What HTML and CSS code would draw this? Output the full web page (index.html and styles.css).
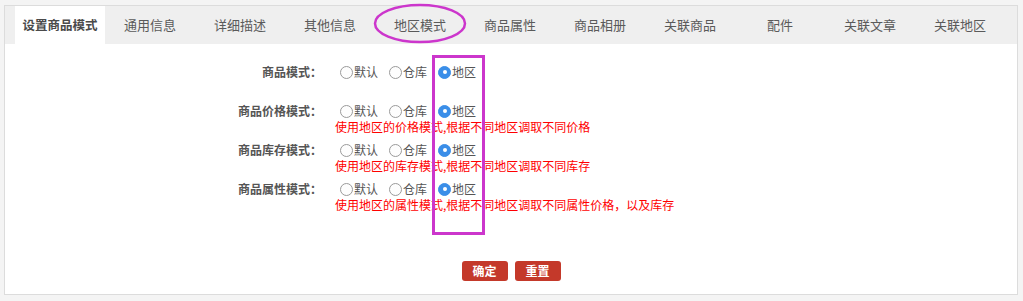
FILE: index.html
```html
<!DOCTYPE html>
<html lang="zh-CN">
<head>
<meta charset="utf-8">
<title>设置商品模式</title>
<link rel="stylesheet" href="styles.css">
</head>
<body>
<div class="panel">
  <ul class="tabs">
    <li class="tab active">设置商品模式</li>
    <li class="tab">通用信息</li>
    <li class="tab">详细描述</li>
    <li class="tab">其他信息</li>
    <li class="tab">地区模式</li>
    <li class="tab">商品属性</li>
    <li class="tab">商品相册</li>
    <li class="tab">关联商品</li>
    <li class="tab">配件</li>
    <li class="tab">关联文章</li>
    <li class="tab">关联地区</li>
  </ul>
  <div class="form">
    <div class="row">
      <div class="label">商品模式：</div>
      <div class="field">
        <div class="options">
          <span class="opt"><span class="radio"></span>默认</span>
          <span class="opt"><span class="radio"></span>仓库</span>
          <span class="opt"><span class="radio checked"></span>地区</span>
        </div>
      </div>
    </div>
    <div class="row">
      <div class="label">商品价格模式：</div>
      <div class="field">
        <div class="options">
          <span class="opt"><span class="radio"></span>默认</span>
          <span class="opt"><span class="radio"></span>仓库</span>
          <span class="opt"><span class="radio checked"></span>地区</span>
        </div>
        <div class="note">使用地区的价格模式,根据不同地区调取不同价格</div>
      </div>
    </div>
    <div class="row">
      <div class="label">商品库存模式：</div>
      <div class="field">
        <div class="options">
          <span class="opt"><span class="radio"></span>默认</span>
          <span class="opt"><span class="radio"></span>仓库</span>
          <span class="opt"><span class="radio checked"></span>地区</span>
        </div>
        <div class="note">使用地区的库存模式,根据不同地区调取不同库存</div>
      </div>
    </div>
    <div class="row">
      <div class="label">商品属性模式：</div>
      <div class="field">
        <div class="options">
          <span class="opt"><span class="radio"></span>默认</span>
          <span class="opt"><span class="radio"></span>仓库</span>
          <span class="opt"><span class="radio checked"></span>地区</span>
        </div>
        <div class="note">使用地区的属性模式,根据不同地区调取不同属性价格，以及库存</div>
      </div>
    </div>
    <div class="buttons">
      <button class="btn">确定</button>
      <button class="btn">重置</button>
    </div>
  </div>
</div>
<svg class="annot" width="1023" height="301" viewBox="0 0 1023 301">
  <ellipse cx="420" cy="23.5" rx="45" ry="18.5" fill="none" stroke="#cc36cc" stroke-width="2.5"/>
  <rect x="433.5" y="56.5" width="50" height="177" fill="none" stroke="#cc36cc" stroke-width="3"/>
</svg>
</body>
</html>
```
FILE: styles.css
```css
html, body {
  margin: 0;
  padding: 0;
}
body {
  background: #f4f4f4;
  font-family: "Noto Sans CJK SC", "Noto Sans", sans-serif;
  width: 1023px;
  height: 301px;
  overflow: hidden;
  position: relative;
}
.panel {
  margin: 5px 5px 0 4px;
  height: 290px;
  border: 1px solid #dcdcdc;
  background: #fff;
  box-sizing: border-box;
}
.tabs {
  list-style: none;
  margin: 0;
  padding: 0 0 0 10px;
  display: flex;
  background: #efefef;
  height: 38px;
}
.tab {
  width: 90px;
  height: 38px;
  line-height: 38px;
  text-align: center;
  font-size: 13px;
  color: #5a5a5a;
}
.tab.active {
  background: #fff;
  font-weight: bold;
  color: #4a4a4a;
  font-size: 12.5px;
}
.form {
  padding-top: 20px;
}
.row {
  display: flex;
  height: 39px;
}
.label {
  width: 317px;
  text-align: right;
  font-size: 12px;
  font-weight: bold;
  color: #555;
  line-height: 16px;
  height: 16px;
}
.field {
  margin-left: 13px;
}
.options {
  display: flex;
  align-items: center;
  height: 16px;
  padding-left: 5px;
  font-size: 12px;
  color: #555;
  line-height: 16px;
}
.opt {
  display: flex;
  align-items: center;
  margin-right: 11px;
}
.radio {
  width: 13px;
  height: 13px;
  box-sizing: border-box;
  border: 1px solid #9a9a9a;
  border-radius: 50%;
  background: #fdfdfd;
  margin-right: 1px;
  display: flex;
  align-items: center;
  justify-content: center;
}
.radio.checked {
  border-color: #3a8ee8;
  background: #3a8ee8;
}
.radio.checked::after {
  content: "";
  width: 4px;
  height: 4px;
  border-radius: 50%;
  background: #fff;
}
.note {
  font-size: 12px;
  line-height: 16px;
  color: #ff0000;
}
.buttons {
  display: flex;
  justify-content: center;
  gap: 7px;
  margin-top: 41px;
}
.btn {
  width: 46px;
  height: 20px;
  padding: 0;
  border: none;
  border-radius: 3px;
  background: #c4392a;
  color: #fff;
  font-family: "Noto Sans CJK SC", "Noto Sans", sans-serif;
  font-size: 12px;
  font-weight: bold;
  line-height: 20px;
}
.annot {
  position: absolute;
  left: 0;
  top: 0;
  pointer-events: none;
}
```
